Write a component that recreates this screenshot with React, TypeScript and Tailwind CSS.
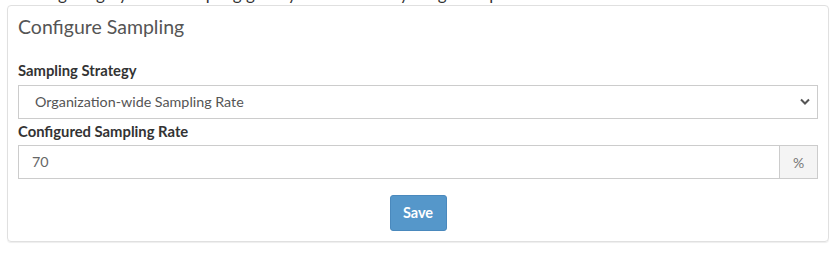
import { useState } from "react";

const font = { fontFamily: "Lato, 'Liberation Sans', sans-serif" };

function ChevronDown() {
  return (
    <svg width="10" height="7" viewBox="0 0 10 7" className="text-[#555]">
      <path d="M1 1.5 L5 5.5 L9 1.5" fill="none" stroke="currentColor" strokeWidth="2" />
    </svg>
  );
}

export default function App() {
  const [strategy, setStrategy] = useState("org");
  const [rate, setRate] = useState("70");

  return (
    <div className="w-[839px] h-[256px] bg-white overflow-hidden" style={font}>
      {/* clipped heading from the section above */}
      <div className="h-[4px] overflow-hidden pl-[18px]">
        <div className="-mt-[16px] text-[17px] leading-[19px] text-[#333] whitespace-nowrap">
          Configuring dynamic sampling gives your team everything for a plan
        </div>
      </div>

      <div className="mt-[1px] ml-[7px] w-[822px] rounded-[4px] border border-[#e0e0e0] shadow-[0_1px_1px_rgba(0,0,0,0.07)] px-[10px] pt-[6px] pb-[10px]">
        <div className="h-[30px] flex items-center text-[19.5px] text-[#555]">Configure Sampling</div>

        <div className="mt-[18px] h-[20px] flex items-center text-[14.8px] font-bold text-[#333]">
          Sampling Strategy
        </div>
        <div className="relative mt-[5px]">
          <select
            value={strategy}
            onChange={(e) => setStrategy(e.target.value)}
            className="w-full h-[34px] appearance-none border border-[#ccc] bg-white pl-[16px] pr-8 text-[14.3px] text-[#555] outline-none"
            style={font}
          >
            <option value="org">Organization-wide Sampling Rate</option>
            <option value="project">Per-project Sampling Rate</option>
          </select>
          <span className="pointer-events-none absolute right-[8px] top-[13px]">
            <ChevronDown />
          </span>
        </div>

        <div className="mt-[2px] h-[20px] flex items-center text-[14.8px] font-bold text-[#333]">
          Configured Sampling Rate
        </div>
        <div className="mt-[4px] flex h-[34px]">
          <input
            value={rate}
            onChange={(e) => setRate(e.target.value)}
            className="flex-1 min-w-0 border border-[#ccc] bg-white pl-[13px] text-[14.3px] text-[#666] outline-none"
            style={font}
          />
          <div className="w-[38px] flex items-center justify-center border border-l-0 border-[#ccc] bg-[#f4f4f4] text-[14px] text-[#777]">
            %
          </div>
        </div>

        <div className="mt-[16px] flex justify-center">
          <button className="h-[36px] w-[57px] rounded-[3px] border border-[#4a89bd] bg-[#5597ca] text-[14.5px] font-bold text-white">
            Save
          </button>
        </div>
      </div>
    </div>
  );
}
